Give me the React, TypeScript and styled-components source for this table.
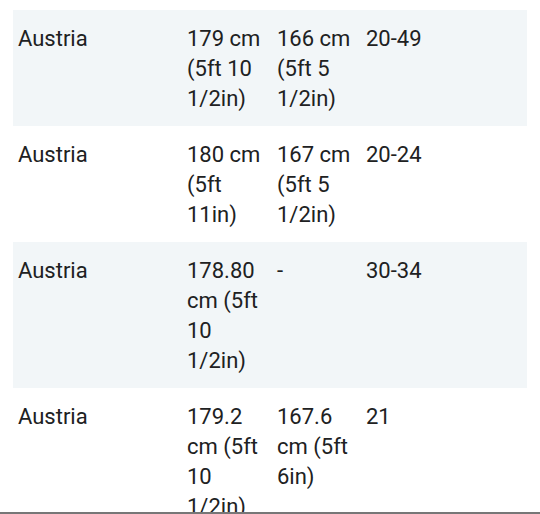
import styled, { createGlobalStyle } from "styled-components";

const GlobalStyle = createGlobalStyle`
	html, body {
		margin: 0;
		padding: 0;
		background: #ffffff;
	}
	body {
		font-family: Roboto, "Noto Sans", sans-serif;
		color: #202122;
	}
`;

const Page = styled.div`
	position: relative;
	width: 540px;
	height: 514px;
	overflow: hidden;
	padding: 10px 13px 0 13px;
	box-sizing: border-box;
`;

const Table = styled.div`
	display: flex;
	flex-direction: column;
	width: 514px;
`;

const Row = styled.div<{ $shaded: boolean }>`
	display: grid;
	grid-template-columns: 169px 90px 89px 1fr;
	background: ${(p) => (p.$shaded ? "#f2f6f8" : "#ffffff")};
`;

const Cell = styled.div`
	padding: 14px 5px 12px 5px;
	font-size: 22px;
	line-height: 30px;
	word-wrap: break-word;
`;

const BottomEdge = styled.div`
	position: absolute;
	left: 0;
	right: 0;
	bottom: 0;
	height: 2px;
	background: #777777;
`;

const rows = [
	["Austria", "179 cm (5ft 10 1/2in)", "166 cm (5ft 5 1/2in)", "20-49"],
	["Austria", "180 cm (5ft 11in)", "167 cm (5ft 5 1/2in)", "20-24"],
	["Austria", "178.80 cm (5ft 10 1/2in)", "-", "30-34"],
	["Austria", "179.2 cm (5ft 10 1/2in)", "167.6 cm (5ft 6in)", "21"],
];

function App() {
	return (
		<>
			<GlobalStyle />
			<Page>
				<Table>
					{rows.map((r, i) => (
						<Row key={i} $shaded={i % 2 === 0}>
							{r.map((c, j) => (
								<Cell key={j}>{c}</Cell>
							))}
						</Row>
					))}
				</Table>
				<BottomEdge />
			</Page>
		</>
	);
}

export default App;
